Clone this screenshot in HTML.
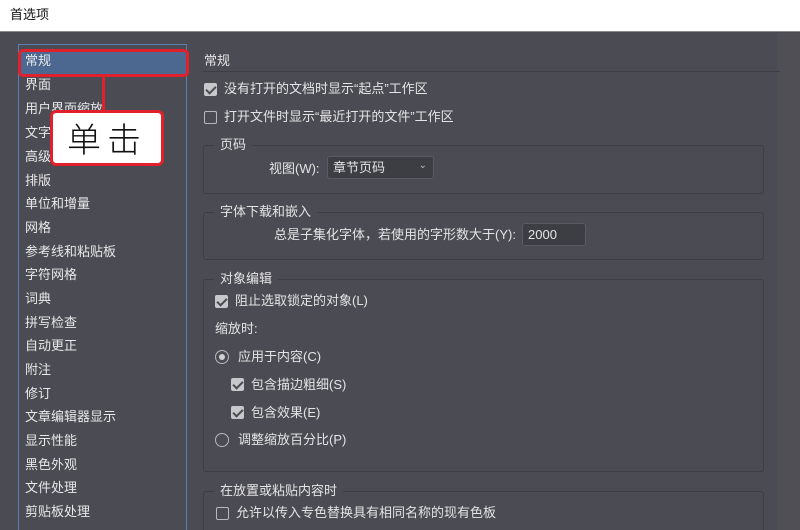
<!DOCTYPE html>
<html><head><meta charset="utf-8"><style>
*{margin:0;padding:0;box-sizing:border-box}
html,body{width:800px;height:530px;overflow:hidden}
body{background:#4b4b53;font-family:"Liberation Sans","Noto Sans CJK SC",sans-serif;font-size:13px;line-height:16px;color:#e4e4e6;position:relative}
.a{position:absolute;white-space:nowrap}
#title{left:0;top:0;width:800px;height:32px;background:#fff;border-bottom:1px solid #8a8a8a;color:#111;font-size:13px;padding:7px 0 0 10px}
#sb{left:777px;top:33px;width:23px;height:497px;background:#4f4f55}
#list{left:18px;top:44px;width:169px;height:500px;border:1px solid #5a7fb0;border-bottom:none}
.li{position:absolute;left:6px;font-size:13px;color:#e8e8ea}
.sel{position:absolute;left:1px;top:6px;width:166px;height:23px;background:#4d6890}
.grp{position:absolute;left:203px;width:561px;border:1px solid #3e3e45;border-radius:3px}
.gt{position:absolute;left:10px;top:-9px;background:#4b4b53;padding:0 6px;font-size:13px}
.cb{position:absolute;width:13px;height:13px;border:1px solid #b8b8bc;border-radius:2px;background:transparent}
.cb.on{background:#c8c8cc;border-color:#c8c8cc}
.cb.on:after{content:"";position:absolute;left:3px;top:0px;width:4px;height:8px;border:solid #4b4b53;border-width:0 2px 2px 0;transform:rotate(45deg)}
.rd{position:absolute;width:14px;height:14px;border:1px solid #b8b8bc;border-radius:50%}
.rd.on:after{content:"";position:absolute;left:3px;top:3px;width:6px;height:6px;border-radius:50%;background:#d0d0d4}
.inp{position:absolute;background:#3d3d44;border:1px solid #5a5a62;border-radius:3px;padding:3px 5px}
</style></head><body>
<div class="a" id="title">首选项</div>
<div class="a" id="sb"></div>
<div class="a" id="list">
<div class="sel"></div>
<div class="li" style="top:8px">常规</div>
<div class="li" style="top:32px">界面</div>
<div class="li" style="top:56px">用户界面缩放</div>
<div class="li" style="top:80px">文字</div>
<div class="li" style="top:104px">高级</div>
<div class="li" style="top:128px">排版</div>
<div class="li" style="top:151px">单位和增量</div>
<div class="li" style="top:175px">网格</div>
<div class="li" style="top:199px">参考线和粘贴板</div>
<div class="li" style="top:222px">字符网格</div>
<div class="li" style="top:246px">词典</div>
<div class="li" style="top:270px">拼写检查</div>
<div class="li" style="top:293px">自动更正</div>
<div class="li" style="top:317px">附注</div>
<div class="li" style="top:341px">修订</div>
<div class="li" style="top:364px">文章编辑器显示</div>
<div class="li" style="top:388px">显示性能</div>
<div class="li" style="top:412px">黑色外观</div>
<div class="li" style="top:435px">文件处理</div>
<div class="li" style="top:459px">剪贴板处理</div>
</div>
<div class="a" style="left:18px;top:49px;width:171px;height:28px;border:3px solid #e0202a;border-radius:5px"></div>
<div class="a" style="left:102px;top:76px;width:3px;height:36px;background:#e0202a"></div>
<div class="a" style="left:50px;top:110px;width:114px;height:56px;background:#fff;border:3px solid #e0202a;border-radius:6px;color:#111;font-size:34px;line-height:50px;text-align:center;font-family:'Noto Sans CJK SC',sans-serif;font-weight:300;letter-spacing:6px">单击</div>
<div class="a" style="left:204px;top:53px">常规</div>
<div class="a" style="left:203px;top:71px;width:577px;height:1px;background:#3e3e45"></div>
<div class="cb on" style="left:204px;top:83px"></div>
<div class="a" style="left:224px;top:81px">没有打开的文档时显示“起点”工作区</div>
<div class="cb" style="left:204px;top:111px"></div>
<div class="a" style="left:224px;top:109px">打开文件时显示“最近打开的文件”工作区</div>
<div class="grp" style="top:145px;height:49px"><div class="gt">页码</div>
<div class="a" style="left:65px;top:15px">视图(W):</div>
<div class="inp" style="left:123px;top:10px;width:107px;height:23px">章节页码<span style="position:absolute;right:6px;top:1px;font-size:10px;color:#bbb">&#8964;</span></div></div>
<div class="grp" style="top:212px;height:48px"><div class="gt">字体下载和嵌入</div>
<div class="a" style="left:70px;top:14px">总是子集化字体，若使用的字形数大于(Y):</div>
<div class="inp" style="left:318px;top:10px;width:64px;height:23px">2000</div></div>
<div class="grp" style="top:279px;height:193px"><div class="gt">对象编辑</div>
<div class="cb on" style="left:11px;top:15px"></div>
<div class="a" style="left:31px;top:13px">阻止选取锁定的对象(L)</div>
<div class="a" style="left:11px;top:41px">缩放时:</div>
<div class="rd on" style="left:11px;top:70px"></div>
<div class="a" style="left:34px;top:69px">应用于内容(C)</div>
<div class="cb on" style="left:27px;top:98px"></div>
<div class="a" style="left:47px;top:97px">包含描边粗细(S)</div>
<div class="cb on" style="left:27px;top:126px"></div>
<div class="a" style="left:47px;top:125px">包含效果(E)</div>
<div class="rd" style="left:11px;top:153px"></div>
<div class="a" style="left:34px;top:152px">调整缩放百分比(P)</div></div>
<div class="grp" style="top:491px;height:60px"><div class="gt">在放置或粘贴内容时</div>
<div class="cb" style="left:12px;top:15px"></div>
<div class="a" style="left:32px;top:13px">允许以传入专色替换具有相同名称的现有色板</div></div>
</body></html>
